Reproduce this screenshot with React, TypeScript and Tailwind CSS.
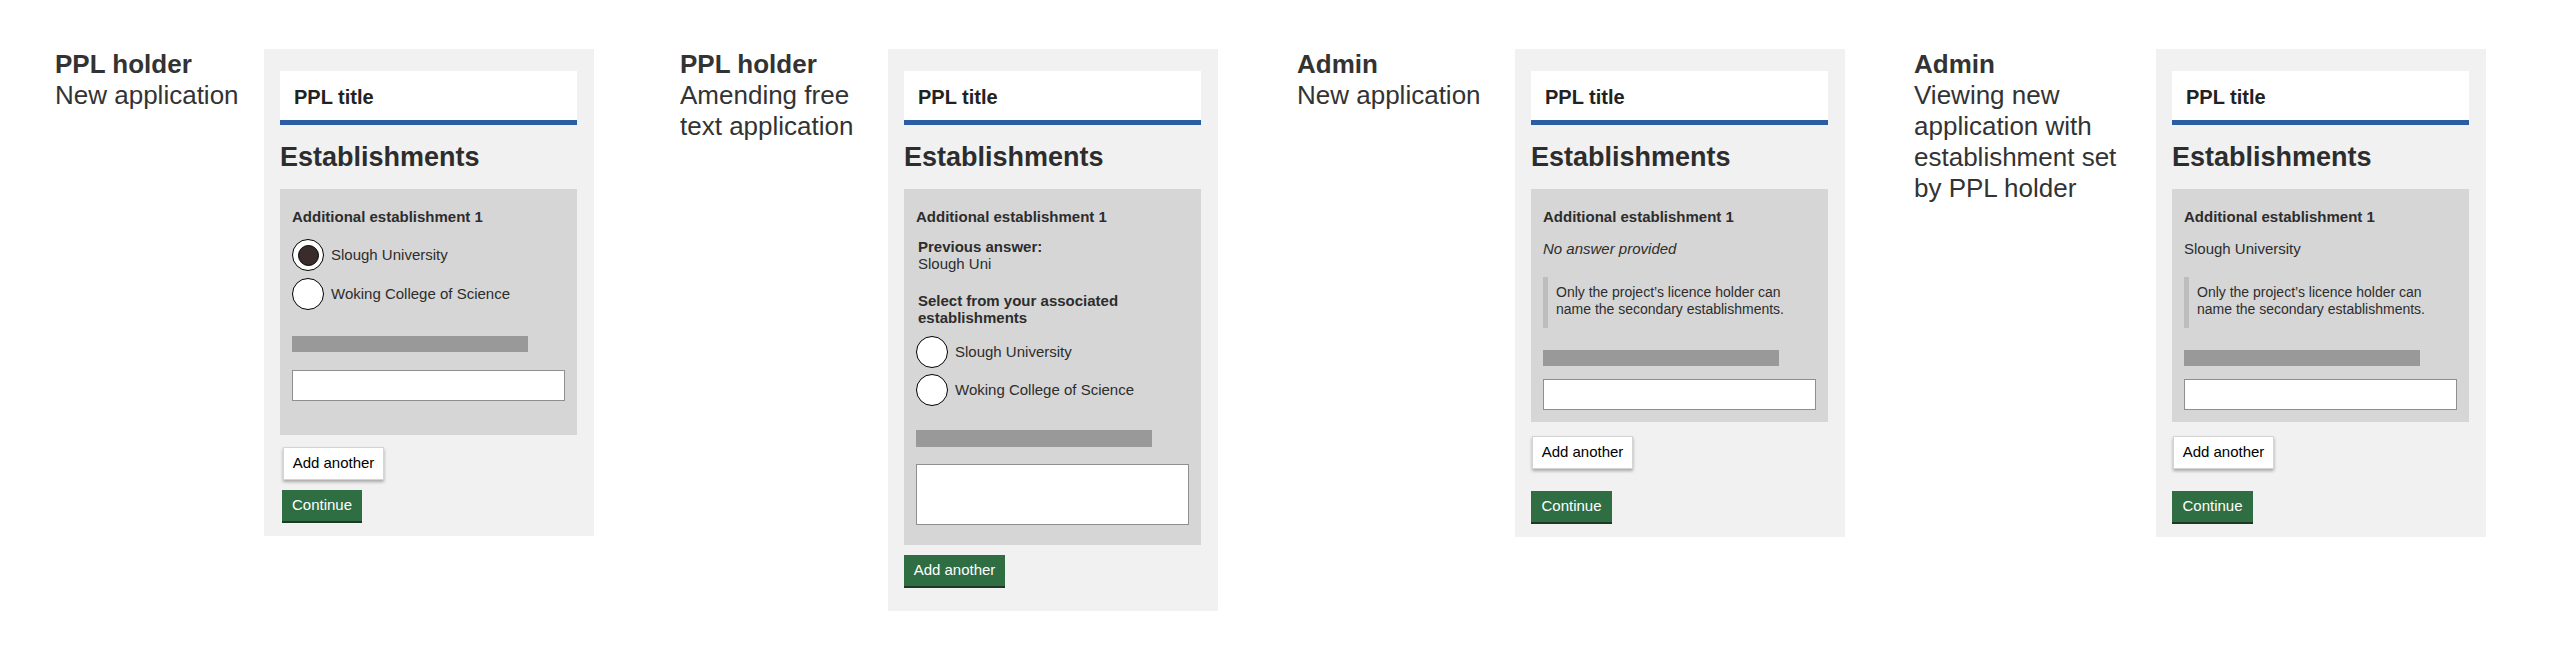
import type { ReactNode } from "react"

const font = { fontFamily: '"Liberation Sans", Arial, sans-serif' }

function Radio({ label, checked = false }: { label: string; checked?: boolean }) {
  return (
    <div className="flex h-[32px] items-center">
      <div className="flex h-[32px] w-[32px] shrink-0 items-center justify-center rounded-full border-[1.5px] border-black bg-white">
        {checked && <div className="h-[21px] w-[21px] rounded-full border border-black bg-[#3b2c2c]" />}
      </div>
      <span className="ml-[7px] text-[15px] text-[#2d2d2d]">{label}</span>
    </div>
  )
}

function WhiteButton({ className = "" }: { className?: string }) {
  return (
    <div
      className={`flex h-[33px] w-[101px] items-center justify-center border border-[#d4d4d4] bg-white text-[15px] text-black shadow-[0_2px_3px_rgba(0,0,0,0.3)] ${className}`}
    >
      Add another
    </div>
  )
}

function GreenButton({ label, className = "" }: { label: string; className?: string }) {
  return (
    <div
      className={`flex h-[33px] items-center justify-center border-b-2 border-[#1b3a25] bg-[#2e6e42] text-[15px] text-white ${className}`}
    >
      {label}
    </div>
  )
}

function Bar({ className = "" }: { className?: string }) {
  return <div className={`w-[236px] bg-[#999999] ${className}`} />
}

function Panel({ children, className = "" }: { children: ReactNode; className?: string }) {
  return (
    <div className={`w-[330px] shrink-0 bg-[#f1f1f1] pl-4 pr-[17px] pt-[22px] ${className}`}>
      <div className="h-[54px] border-b-[5px] border-[#2a5da3] bg-white pl-[14px] pt-[14px]">
        <div className="text-[20px] font-bold leading-[24px] text-[#222]">PPL title</div>
      </div>
      <h2 className="mt-[15px] text-[27px] font-bold leading-[34px] text-[#2d2d2d]">Establishments</h2>
      {children}
    </div>
  )
}

function Label({ title, sub, className = "" }: { title: string; sub: string; className?: string }) {
  return (
    <div className={`shrink-0 text-[26px] leading-[31px] text-[#333] ${className}`}>
      <div className="font-bold">{title}</div>
      <div>{sub}</div>
    </div>
  )
}

function BoxHeading() {
  return <div className="text-[15px] font-bold leading-[20px] text-[#2d2d2d]">Additional establishment 1</div>
}

function Note() {
  return (
    <div className="mt-[20px] border-l-[5px] border-[#bdbdbd] pb-[10px] pl-[8px] pt-[7px] text-[14px] leading-[17px] text-[#2d2d2d]">
      Only the project’s licence holder can name the secondary establishments.
    </div>
  )
}

export default function App() {
  return (
    <div className="flex h-[654px] w-[2576px] items-start bg-white pl-[55px] pt-[49px]" style={font}>
      {/* PPL holder, new application */}
      <div className="flex items-start">
        <Label title="PPL holder" sub="New application" className="w-[209px]" />
        <Panel className="pb-[13px]">
          <div className="mt-[15px] bg-[#d6d6d6] px-3 pb-[34px] pt-[18px]">
            <BoxHeading />
            <div className="mt-[12px] flex flex-col gap-[7px]">
              <Radio label="Slough University" checked />
              <Radio label="Woking College of Science" />
            </div>
            <Bar className="mt-[26px] h-[16px]" />
            <div className="mt-[18px] h-[31px] border border-[#8f8f8f] bg-white" />
          </div>
          <WhiteButton className="ml-[3px] mt-[12px]" />
          <GreenButton label="Continue" className="ml-[2px] mt-[10px] w-[80px]" />
        </Panel>
      </div>

      {/* PPL holder, amending */}
      <div className="ml-[86px] flex items-start">
        <Label title="PPL holder" sub="Amending free text application" className="w-[208px]" />
        <Panel className="pb-[23px]">
          <div className="mt-[15px] bg-[#d6d6d6] px-3 pb-[20px] pt-[18px]">
            <BoxHeading />
            <div className="ml-[2px] mt-[11px] text-[15px] leading-[17px] text-[#2d2d2d]">
              <div className="font-bold">Previous answer:</div>
              <div>Slough Uni</div>
              <div className="mt-[20px] font-bold">Select from your associated establishments</div>
            </div>
            <div className="mt-[10px] flex flex-col gap-[6px]">
              <Radio label="Slough University" />
              <Radio label="Woking College of Science" />
            </div>
            <Bar className="mt-[24px] h-[17px]" />
            <div className="mt-[17px] h-[61px] border border-[#8f8f8f] bg-white" />
          </div>
          <GreenButton label="Add another" className="mt-[10px] w-[101px]" />
        </Panel>
      </div>

      {/* Admin, new application */}
      <div className="ml-[79px] flex items-start">
        <Label title="Admin" sub="New application" className="w-[218px]" />
        <Panel className="pb-[13px]">
          <div className="mt-[15px] bg-[#d6d6d6] px-3 pb-[12px] pt-[18px]">
            <BoxHeading />
            <div className="mt-[13px] text-[15px] italic leading-[17px] text-[#2d2d2d]">No answer provided</div>
            <Note />
            <Bar className="mt-[22px] h-[16px]" />
            <div className="mt-[13px] h-[31px] border border-[#8f8f8f] bg-white" />
          </div>
          <WhiteButton className="ml-[1px] mt-[14px] h-[32px] w-[100px]" />
          <GreenButton label="Continue" className="mt-[22px] w-[81px]" />
        </Panel>
      </div>

      {/* Admin, viewing */}
      <div className="ml-[69px] flex items-start">
        <Label
          title="Admin"
          sub="Viewing new application with establishment set by PPL holder"
          className="w-[242px] pr-[19px]"
        />
        <Panel className="pb-[13px]">
          <div className="mt-[15px] bg-[#d6d6d6] px-3 pb-[12px] pt-[18px]">
            <BoxHeading />
            <div className="mt-[13px] text-[15px] leading-[17px] text-[#2d2d2d]">Slough University</div>
            <Note />
            <Bar className="mt-[22px] h-[16px]" />
            <div className="mt-[13px] h-[31px] border border-[#8f8f8f] bg-white" />
          </div>
          <WhiteButton className="ml-[1px] mt-[14px] h-[32px] w-[100px]" />
          <GreenButton label="Continue" className="mt-[22px] w-[81px]" />
        </Panel>
      </div>
    </div>
  )
}
